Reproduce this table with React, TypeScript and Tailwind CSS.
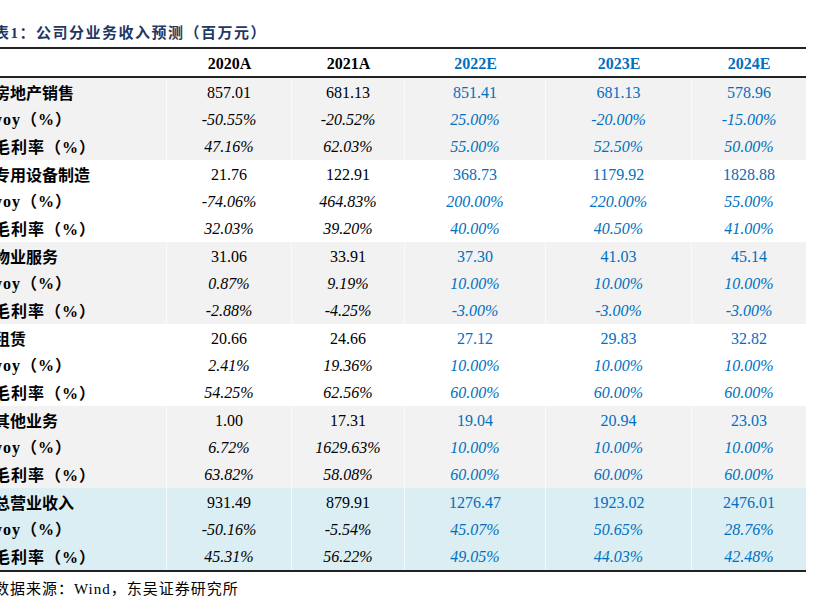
import React from "react";

type Group = { name: string; bg: string; rows: string[][] };

const groups: Group[] = [
  {
    name: "房地产销售",
    bg: "bg-[#f2f2f2]",
    rows: [
      ["857.01", "681.13", "851.41", "681.13", "578.96"],
      ["-50.55%", "-20.52%", "25.00%", "-20.00%", "-15.00%"],
      ["47.16%", "62.03%", "55.00%", "52.50%", "50.00%"],
    ],
  },
  {
    name: "专用设备制造",
    bg: "bg-white",
    rows: [
      ["21.76", "122.91", "368.73", "1179.92", "1828.88"],
      ["-74.06%", "464.83%", "200.00%", "220.00%", "55.00%"],
      ["32.03%", "39.20%", "40.00%", "40.50%", "41.00%"],
    ],
  },
  {
    name: "物业服务",
    bg: "bg-[#f2f2f2]",
    rows: [
      ["31.06", "33.91", "37.30", "41.03", "45.14"],
      ["0.87%", "9.19%", "10.00%", "10.00%", "10.00%"],
      ["-2.88%", "-4.25%", "-3.00%", "-3.00%", "-3.00%"],
    ],
  },
  {
    name: "租赁",
    bg: "bg-white",
    rows: [
      ["20.66", "24.66", "27.12", "29.83", "32.82"],
      ["2.41%", "19.36%", "10.00%", "10.00%", "10.00%"],
      ["54.25%", "62.56%", "60.00%", "60.00%", "60.00%"],
    ],
  },
  {
    name: "其他业务",
    bg: "bg-[#f2f2f2]",
    rows: [
      ["1.00", "17.31", "19.04", "20.94", "23.03"],
      ["6.72%", "1629.63%", "10.00%", "10.00%", "10.00%"],
      ["63.82%", "58.08%", "60.00%", "60.00%", "60.00%"],
    ],
  },
  {
    name: "总营业收入",
    bg: "bg-[#daeef3]",
    rows: [
      ["931.49", "879.91", "1276.47", "1923.02", "2476.01"],
      ["-50.16%", "-5.54%", "45.07%", "50.65%", "28.76%"],
      ["45.31%", "56.22%", "49.05%", "44.03%", "42.48%"],
    ],
  },
];

const headers = ["2020A", "2021A", "2022E", "2023E", "2024E"];
const rowHeights = ["h-[27px]", "h-[27px]", "h-[28px]"];
const serif = "font-['Liberation_Serif','Noto_Sans_CJK_SC',serif]";
const cjk = "font-['Noto_Sans_CJK_SC',sans-serif]";
const gridCols = "grid grid-cols-[173px_125px_113px_141px_146px_114px]";

function Label({ text }: { text: string }) {
  if (text === "yoy") {
    return (
      <span className="font-bold text-black text-[16px] tracking-[1px]">
        yoy<span className={cjk}>（</span>%<span className={cjk}>）</span>
      </span>
    );
  }
  if (text === "gm") {
    return (
      <span className="font-bold text-black text-[16px] tracking-[1px]">
        <span className={cjk}>毛利率（</span>%<span className={cjk}>）</span>
      </span>
    );
  }
  return <span className={`font-bold text-black text-[16px] ${cjk}`}>{text}</span>;
}

export default function App() {
  return (
    <div className={`w-[819px] h-[613px] overflow-hidden bg-white ${serif}`}>
      <div className="ml-[-6px] w-[812px] pt-[22px]">
        <div className="h-[20px] leading-[20px] text-[15px] font-bold text-[#1f3864] tracking-[1.5px]">
          表1<span className={cjk}>：公司分业务收入预测（百万元）</span>
        </div>
        <div className="mt-[5px] border-t-2 border-b-2 border-[#222]">
          <div className={`${gridCols} h-[27px]`}>
            <div />
            {headers.map((h, i) => (
              <div
                key={h}
                className={`flex items-center justify-center pt-[2px] text-[16px] font-bold ${i < 2 ? "text-black" : "text-[#0070c0]"}`}
              >
                {h}
              </div>
            ))}
          </div>
        </div>
        <div className="border-b-2 border-[#222]">
          {groups.map((g) => (
            <div key={g.name} className={g.bg}>
              {g.rows.map((r, ri) => (
                <div key={ri} className={`${gridCols} ${rowHeights[ri]}`}>
                  <div className="flex items-center pt-[1px] border-r border-white/70">
                    <Label text={ri === 0 ? g.name : ri === 1 ? "yoy" : "gm"} />
                  </div>
                  {r.map((v, ci) => (
                    <div
                      key={ci}
                      className={`flex items-center justify-center pt-[2px] text-[16px] ${ci < 4 ? "border-r border-white/70" : ""} ${ri > 0 ? "italic" : ""} ${ci < 2 ? "text-black" : "text-[#0070c0]"}`}
                    >
                      {v}
                    </div>
                  ))}
                </div>
              ))}
            </div>
          ))}
        </div>
        <div className="mt-[6px] h-[20px] leading-[20px] text-[15px] text-black tracking-[1px]">
          <span className={cjk}>数据来源：</span>Wind<span className={cjk}>，东吴证券研究所</span>
        </div>
      </div>
    </div>
  );
}
